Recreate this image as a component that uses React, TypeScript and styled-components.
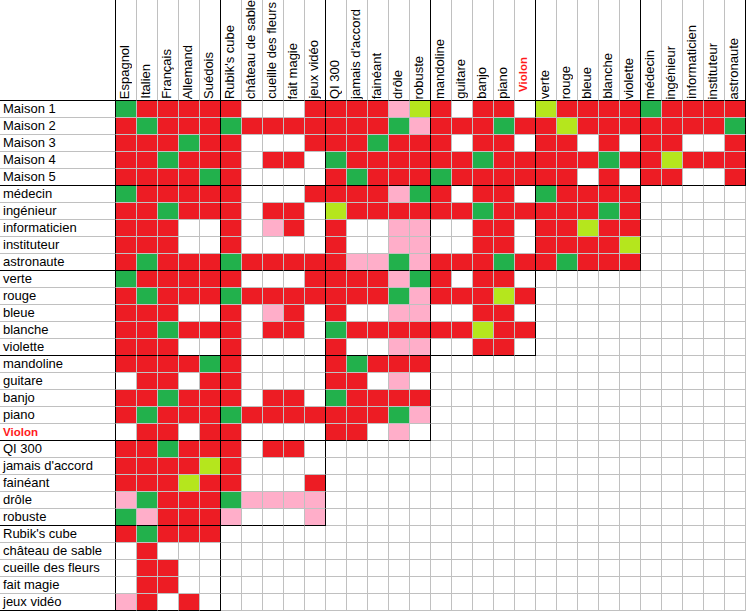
import React from 'react';
import styled, { createGlobalStyle } from 'styled-components';

const GlobalStyle = createGlobalStyle`
  html, body {
    margin: 0;
    padding: 0;
    background: #ffffff;
  }
  body {
    font-family: 'Liberation Sans', Arial, sans-serif;
  }
`;

const INK = '#000000';
const GRID = '#c0c0c0';

const FILLS: Record<string, string> = {
  R: '#ed1c24',
  G: '#22b14c',
  L: '#b5e61d',
  P: '#ffaec9',
  W: '#ffffff',
  '.': '#ffffff',
};

const columns = [
  'Espagnol', 'Italien', 'Français', 'Allemand', 'Suédois',
  "Rubik's cube", 'château de sable', 'cueille des fleurs', 'fait magie', 'jeux vidéo',
  'QI 300', "jamais d'accord", 'fainéant', 'drôle', 'robuste',
  'mandoline', 'guitare', 'banjo', 'piano', 'Violon',
  'verte', 'rouge', 'bleue', 'blanche', 'violette',
  'médecin', 'ingénieur', 'informaticien', 'instituteur', 'astronaute',
];

const rows = [
  'Maison 1', 'Maison 2', 'Maison 3', 'Maison 4', 'Maison 5',
  'médecin', 'ingénieur', 'informaticien', 'instituteur', 'astronaute',
  'verte', 'rouge', 'bleue', 'blanche', 'violette',
  'mandoline', 'guitare', 'banjo', 'piano', 'Violon',
  'QI 300', "jamais d'accord", 'fainéant', 'drôle', 'robuste',
  "Rubik's cube", 'château de sable', 'cueille des fleurs', 'fait magie', 'jeux vidéo',
];

// R red, G green, L lime, P pink, W white (inside a block)
const matrix = [
  'GRRRR RWWWR RRRPL RWRRW LRRRR GRRRR',
  'RGRRR GRRRR RRRGP RRRGR RLRRR RRRRG',
  'RRRGR RWWWR RRGRR RWRRW RRWRW RRWWR',
  'RRGRR RWRRW GRRRR RRGRR RRRGR RLRRR',
  'RRRRG RWWWW RGRRR GRRRR RRWRW RRWWR',
  'GRRRR RWWWR RRRPG RWRRW GRRRR',
  'RRGRR RWRRW LRRRR RRGRR RRRGR',
  'RRRWW RWPRW RWWPP WWRRW RRLRR',
  'RRRWW RWWWW RWWPP WWRRW RRRRL',
  'RGRRR GRRRR RPPGP RRRGR RGRRR',
  'GRRRR RWWWR RRRPG RWRRW',
  'RGRRR GRRRR RRRGP RRRLR',
  'RRRWW RWPRW RWWPP WWRRW',
  'RRGRR RWRRW GRRRR RRLRR',
  'RRRWW RWWWW RWWPP WWRRW',
  'RRRRG RWWWW RGRRR',
  'WRRWR RWWWW RRWPW',
  'RRGRR RWRRW GRRRR',
  'RGRRR GRRRR RRRGP',
  'WRRWR RWWWW RRWPW',
  'RRGRR RWRRW',
  'RRRRL RWWWW',
  'RRRLR RWWWR',
  'PGRRR GPPPP',
  'GPRRR PWWWP',
  'RGRRR',
  'WRWWW',
  'WRRWW',
  'WRRWW',
  'PRWRW',
].map((line) => line.replace(/ /g, '').padEnd(30, '.'));

const ACCENT = 'Violon';

const inBlock = (r: number, c: number) => Math.floor(r / 5) + Math.floor(c / 5) <= 5;

export default function App() {
  return (
    <>
      <GlobalStyle />
      <Sheet>
        <Corner />
        {columns.map((name, c) => (
          <HeadCell key={name} $edge={c % 5 === 4}>
            <HeadText $accent={name === ACCENT}>{name}</HeadText>
          </HeadCell>
        ))}
        {rows.map((name, r) => (
          <React.Fragment key={name}>
            <RowLabel $edge={r % 5 === 4} $accent={name === ACCENT}>
              {name}
            </RowLabel>
            {matrix[r].split('').map((code, c) => {
              const inside = inBlock(r, c);
              return (
                <Cell
                  key={c}
                  $fill={FILLS[code]}
                  $right={inside && c % 5 === 4 ? INK : GRID}
                  $bottom={inside && r % 5 === 4 ? INK : GRID}
                />
              );
            })}
          </React.Fragment>
        ))}
      </Sheet>
    </>
  );
}

const Sheet = styled.div`
  display: grid;
  grid-template-columns: 116px repeat(30, 21px);
  grid-template-rows: 101px repeat(30, 17px);
  width: 746px;
  font-size: 13px;
  color: #000;
  background: #fff;
`;

const Corner = styled.div`
  box-sizing: border-box;
  border-right: 1px solid ${INK};
  border-bottom: 1px solid ${INK};
`;

const HeadCell = styled.div<{ $edge: boolean }>`
  box-sizing: border-box;
  display: flex;
  align-items: flex-end;
  justify-content: flex-start;
  overflow: hidden;
  padding: 0 0 1px 1px;
  border-right: 1px solid ${(p) => (p.$edge ? INK : GRID)};
  border-bottom: 1px solid ${INK};
`;

const HeadText = styled.span<{ $accent?: boolean }>`
  writing-mode: vertical-rl;
  transform: rotate(180deg);
  white-space: nowrap;
  line-height: 15px;
  font-size: ${(p) => (p.$accent ? '11.5px' : '13px')};
  font-weight: ${(p) => (p.$accent ? 700 : 400)};
  color: ${(p) => (p.$accent ? '#ff1a1a' : '#000')};
  margin-bottom: ${(p) => (p.$accent ? '7px' : '0')};
`;

const RowLabel = styled.div<{ $edge: boolean; $accent?: boolean }>`
  box-sizing: border-box;
  padding-left: 3px;
  line-height: 16px;
  white-space: nowrap;
  overflow: hidden;
  border-right: 1px solid ${INK};
  border-bottom: 1px solid ${(p) => (p.$edge ? INK : GRID)};
  font-size: ${(p) => (p.$accent ? '11.5px' : '13px')};
  font-weight: ${(p) => (p.$accent ? 700 : 400)};
  color: ${(p) => (p.$accent ? '#ff1a1a' : '#000')};
`;

const Cell = styled.div<{ $fill: string; $right: string; $bottom: string }>`
  box-sizing: border-box;
  background: ${(p) => p.$fill};
  border-right: 1px solid ${(p) => p.$right};
  border-bottom: 1px solid ${(p) => p.$bottom};
`;
